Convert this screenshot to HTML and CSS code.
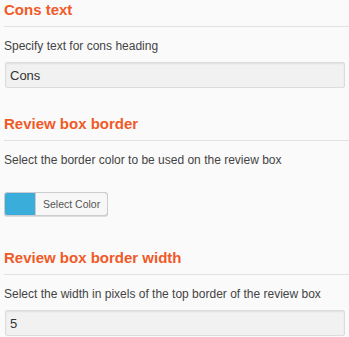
FILE: index.html
```html
<!DOCTYPE html>
<html>
<head>
    <title>Review box settings</title>
    <link rel="stylesheet" href="styles.css">
</head>
<body>
    <div class="settings">
        <div class="field">
            <h3 class="field-title">Cons text</h3>
            <p class="field-desc">Specify text for cons heading</p>
            <input class="text-input" type="text" value="Cons">
        </div>

        <div class="field">
            <h3 class="field-title">Review box border</h3>
            <p class="field-desc">Select the border color to be used on the review box</p>
            <button class="color-result">
                <span class="color-swatch"></span>
                <span class="color-label">Select Color</span>
            </button>
        </div>

        <div class="field">
            <h3 class="field-title">Review box border width</h3>
            <p class="field-desc">Select the width in pixels of the top border of the review box</p>
            <input class="text-input" type="text" value="5">
        </div>
    </div>
</body>
</html>
```

FILE: styles.css
```css
body{
    margin: 0;
    background-color: #fafafa;
    font-family: "Liberation Sans", Arial, sans-serif;
    color: #444;
}

.settings{
    padding: 1px 0 0 4px;
}

.field{
    margin-bottom: 27px;
}

.field:last-child{
    margin-bottom: 0;
}

.field-title{
    margin: 0;
    padding-bottom: 7px;
    border-bottom: 1px solid #e2e2e2;
    font-size: 15px;
    line-height: 18px;
    font-weight: bold;
    color: #f05a28;
}

.field-desc{
    margin: 11px 0 0 0;
    font-size: 12px;
    line-height: 16px;
}

.text-input{
    display: block;
    box-sizing: border-box;
    width: calc(100% - 5px);
    height: 26px;
    margin: 8px 0 0 1px;
    padding: 0 4px;
    border: 1px solid #dcdcdc;
    border-radius: 2px;
    background-color: #f1f1f1;
    box-shadow: inset 0 1px 2px rgba(0, 0, 0, 0.07);
    font-family: "Liberation Sans", Arial, sans-serif;
    font-size: 13px;
    color: #333;
}

.color-result{
    display: flex;
    height: 24px;
    margin-top: 24px;
    margin-bottom: 33px;
    padding: 0;
    border: 1px solid #ccc;
    border-radius: 3px;
    background-color: #3aaddb;
    box-shadow: 0 1px 0 #ddd;
    overflow: hidden;
    cursor: pointer;
}

.color-swatch{
    width: 30px;
}

.color-label{
    display: flex;
    align-items: center;
    padding: 0 7px;
    border-left: 1px solid #ccc;
    background-color: #f7f7f7;
    font-family: "Liberation Sans", Arial, sans-serif;
    font-size: 10.5px;
    color: #555;
}
```
